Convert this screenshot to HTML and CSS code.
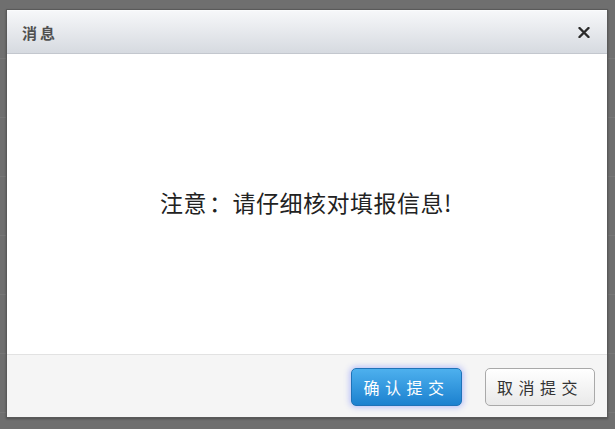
FILE: index.html
```html
<!DOCTYPE html>
<html lang="zh-CN">
<head>
    <meta charset="UTF-8" />
    <meta name="viewport" content="width=device-width, initial-scale=1.0" />
    <title>消息</title>
    <link rel="stylesheet" href="styles.css">
</head>
<body>
    <div class="backdrop">
        <!-- Modal dialog -->
        <div class="dialog">
            <header class="dialog-head">
                <span class="dialog-title">消息</span>
                <button class="dialog-close" title="关闭">
                    <svg width="12" height="11" viewBox="0 0 12 11">
                        <path d="M1.5 1 L10.5 10 M10.5 1 L1.5 10" stroke="#2a2a2a" stroke-width="2.4" stroke-linecap="round" />
                    </svg>
                </button>
            </header>
            <main class="dialog-body">
                <p class="message">注意<span class="colon">：</span>请仔细核对填报信息!</p>
            </main>
            <footer class="dialog-foot">
                <button class="btn btn-primary">确认提交</button>
                <button class="btn btn-default">取消提交</button>
            </footer>
        </div>
    </div>
</body>
</html>
```

FILE: styles.css
```css
/* === Basic Reset & Font === */
body, p {
    margin: 0;
    padding: 0;
}

body {
    font-family: "Noto Sans CJK SC", "Liberation Sans", sans-serif;
    background: #6f6f6f;
    color: #333;
}

/* === Page behind the modal === */
.backdrop {
    height: 429px;
    padding: 9px 6px 0 6px;
    box-sizing: border-box;
    background: repeating-linear-gradient(to bottom, #6f6f6f 0, #6f6f6f 58px, #777 58px, #777 59px);
}

/* === Dialog === */
.dialog {
    width: 602px;
    height: 409px;
    display: flex;
    flex-direction: column;
    border: 1px solid #5a5a5a;
    box-sizing: border-box;
    background: #fff;
    box-shadow: 0 1px 2px rgba(0, 0, 0, 0.3);
}

.dialog-head {
    height: 44px;
    flex: none;
    display: flex;
    align-items: center;
    justify-content: space-between;
    padding: 0 17px 0 15px;
    background: linear-gradient(to bottom, #f6f7f9, #d6dae0);
    border-top: 1px solid #fafbfc;
    border-bottom: 1px solid #c3c7ce;
    box-sizing: border-box;
}

    .dialog-title {
        font-size: 15px;
        font-weight: bold;
        color: #505050;
        letter-spacing: 3px;
    }

    .dialog-close {
        border: none;
        background: none;
        padding: 0;
        margin-top: 1px;
        display: flex;
        cursor: pointer;
    }

.dialog-body {
    flex: 1;
    display: flex;
    align-items: center;
    justify-content: center;
    padding-bottom: 4px;
}

    .message {
        font-size: 23px;
        letter-spacing: 0.5px;
        color: #222;
        padding-right: 2px;
    }

        .message .colon {
            padding-left: 2px;
        }

.dialog-foot {
    height: 63px;
    flex: none;
    display: flex;
    align-items: center;
    justify-content: flex-end;
    gap: 23px;
    padding: 2px 12px 0 0;
    background: #f5f5f5;
    border-top: 1px solid #e2e2e2;
    box-sizing: border-box;
}

/* === Buttons === */
.btn {
    width: 111px;
    height: 38px;
    border-radius: 5px;
    font-family: inherit;
    font-size: 16px;
    letter-spacing: 5.5px;
    padding: 0;
    cursor: pointer;
}

.btn-primary {
    color: #fff;
    background: linear-gradient(to bottom, #4db0ee, #1c81cf);
    border: 1px solid #1f73b8;
    box-shadow: 0 0 6px 1px rgba(90, 110, 255, 0.45);
}

.btn-default {
    width: 110px;
    color: #333;
    background: linear-gradient(to bottom, #ffffff, #e9e9e9);
    border: 1px solid #a9a9a9;
}
```
